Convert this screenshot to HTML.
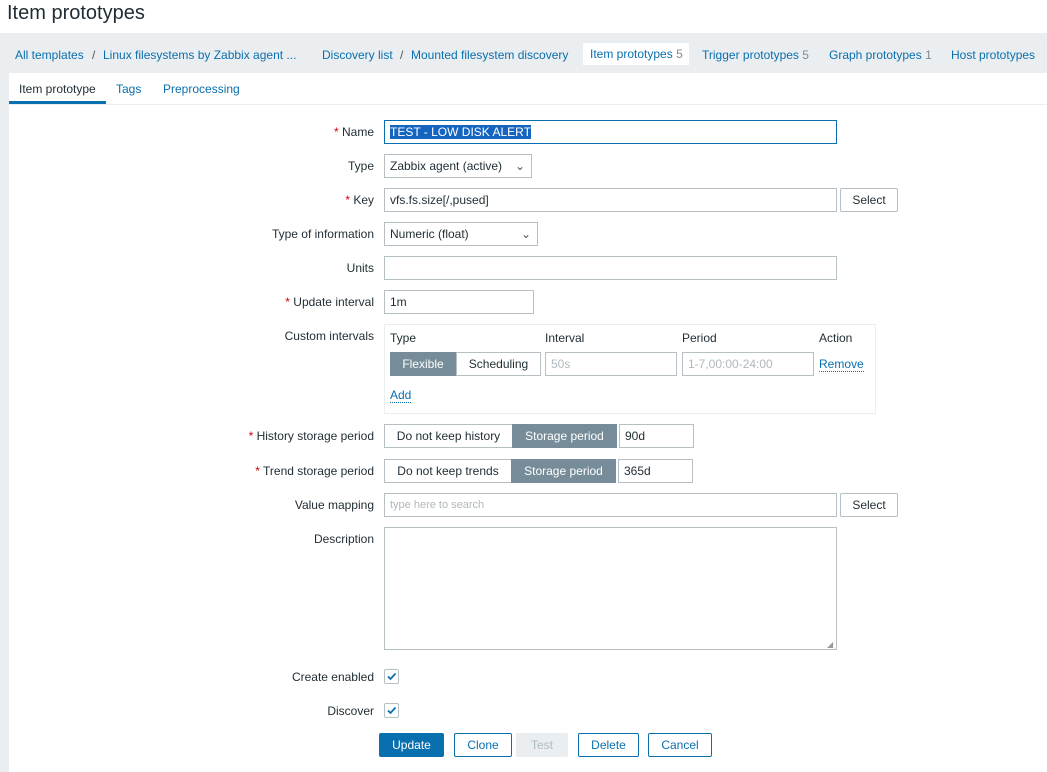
<!DOCTYPE html>
<html><head><meta charset="utf-8"><style>
*{box-sizing:border-box;margin:0;padding:0}
body{width:1047px;height:772px;background:#fff;font-family:"Liberation Sans",sans-serif;font-size:12px;color:#1f2c33;position:relative;overflow:hidden}
.a{position:absolute}
.lnk{color:#0a6fae}
.cnt{color:#808b91}
.lbl{position:absolute;right:673px;text-align:right;white-space:nowrap}
.req{color:#d40000}
.inp{position:absolute;border:1px solid #b6c0c4;background:#fff;height:24px;line-height:22px;padding-left:5px;white-space:nowrap}
.btn2{position:absolute;border:1px solid #0a6fae;color:#0a6fae;background:#fff;height:24px;line-height:22px;text-align:center;border-radius:2px}
.chk{position:absolute;width:15px;height:15px;border:1px solid #b6c0c4;border-radius:2px;background:#fff}
.seg{position:absolute;height:24px;line-height:22px;text-align:center;border:1px solid #b6c0c4}
.on{background:#768d99;color:#fff;border-color:#768d99}
</style></head><body>
<div class="a" style="left:7px;top:2px;font-size:20px;color:#1f2c33">Item prototypes</div>
<div class="a" style="left:0;top:33px;width:1047px;height:739px;background:#ebeef0"></div>
<div class="a" style="left:9px;top:73px;width:1038px;height:699px;background:#fff"></div>
<div class="a" style="left:0;top:34px;width:1047px;height:40px;line-height:42px;white-space:nowrap">
<span class="a lnk" style="left:15px">All templates</span><span class="a" style="left:92px;color:#555">/</span>
<span class="a lnk" style="left:103px">Linux filesystems by Zabbix agent ...</span>
<span class="a lnk" style="left:322px">Discovery list</span><span class="a" style="left:400px;color:#555">/</span>
<span class="a lnk" style="left:411px">Mounted filesystem discovery</span>
</div>
<div class="a" style="left:583px;top:43px;width:106px;height:22px;background:#fff;line-height:23px;padding-left:7px;white-space:nowrap"><span class="lnk">Item prototypes</span> <span class="cnt">5</span></div>
<div class="a" style="left:702px;top:48px;white-space:nowrap"><span class="lnk">Trigger prototypes</span> <span class="cnt">5</span></div>
<div class="a" style="left:829px;top:48px;white-space:nowrap"><span class="lnk">Graph prototypes</span> <span class="cnt">1</span></div>
<div class="a" style="left:951px;top:48px;white-space:nowrap"><span class="lnk">Host prototypes</span></div>
<div class="a" style="left:19px;top:82px">Item prototype</div>
<div class="a lnk" style="left:116px;top:82px">Tags</div>
<div class="a lnk" style="left:163px;top:82px">Preprocessing</div>
<div class="a" style="left:9px;top:104px;width:1038px;height:1px;background:#ebeef0"></div>
<div class="a" style="left:9px;top:101px;width:97px;height:3px;background:#0a6fae"></div>

<div class="lbl" style="top:125px"><span class="req">*</span> Name</div>
<div class="inp" style="left:384px;top:120px;width:453px;border-color:#0a6fae"><span style="background:#1565c0;color:#fff">TEST - LOW DISK ALERT</span></div>
<div class="lbl" style="top:159px">Type</div>
<div class="inp" style="left:384px;top:154px;width:148px">Zabbix agent (active)<span class="a" style="right:6px;color:#555">&#8964;</span></div>
<div class="lbl" style="top:193px"><span class="req">*</span> Key</div>
<div class="inp" style="left:384px;top:188px;width:453px">vfs.fs.size[/,pused]</div>
<div class="inp" style="left:840px;top:188px;width:58px;padding:0;text-align:center;border-radius:2px">Select</div>
<div class="lbl" style="top:227px">Type of information</div>
<div class="inp" style="left:384px;top:222px;width:154px">Numeric (float)<span class="a" style="right:6px;color:#555">&#8964;</span></div>
<div class="lbl" style="top:261px">Units</div>
<div class="inp" style="left:384px;top:256px;width:453px"></div>
<div class="lbl" style="top:295px"><span class="req">*</span> Update interval</div>
<div class="inp" style="left:384px;top:290px;width:150px">1m</div>
<div class="lbl" style="top:329px">Custom intervals</div>
<div class="a" style="left:384px;top:324px;width:492px;height:90px;border:1px solid #ebeef0"></div>
<div class="a" style="left:390px;top:331px">Type</div>
<div class="a" style="left:545px;top:331px">Interval</div>
<div class="a" style="left:682px;top:331px">Period</div>
<div class="a" style="left:819px;top:331px">Action</div>
<div class="seg on" style="left:390px;top:352px;width:66px">Flexible</div>
<div class="seg" style="left:456px;top:352px;width:85px">Scheduling</div>
<div class="inp" style="left:545px;top:352px;width:132px;color:#b0b8bc">50s</div>
<div class="inp" style="left:682px;top:352px;width:132px;color:#b0b8bc">1-7,00:00-24:00</div>
<div class="a lnk" style="left:819px;top:357px;border-bottom:1px dotted #0a6fae">Remove</div>
<div class="a lnk" style="left:390px;top:388px;border-bottom:1px dotted #0a6fae">Add</div>
<div class="lbl" style="top:429px"><span class="req">*</span> History storage period</div>
<div class="seg" style="left:384px;top:424px;width:129px">Do not keep history</div>
<div class="seg on" style="left:512px;top:424px;width:105px">Storage period</div>
<div class="inp" style="left:619px;top:424px;width:75px">90d</div>
<div class="lbl" style="top:464px"><span class="req">*</span> Trend storage period</div>
<div class="seg" style="left:384px;top:459px;width:128px">Do not keep trends</div>
<div class="seg on" style="left:511px;top:459px;width:105px">Storage period</div>
<div class="inp" style="left:618px;top:459px;width:75px">365d</div>
<div class="lbl" style="top:498px">Value mapping</div>
<div class="inp" style="left:384px;top:493px;width:453px;color:#b0b8bc;font-size:11px">type here to search</div>
<div class="inp" style="left:840px;top:493px;width:58px;padding:0;text-align:center;border-radius:2px">Select</div>
<div class="lbl" style="top:532px">Description</div>
<div class="inp" style="left:384px;top:527px;width:453px;height:123px"></div>
<div class="a" style="left:827px;top:640px;color:#999;font-size:8px">◢</div>
<div class="lbl" style="top:670px">Create enabled</div>
<div class="chk" style="left:384px;top:669px"><svg width="13" height="13" viewBox="0 0 13 13"><path d="M3 6.5l2.5 2.5L10.5 3.5" stroke="#0a6fae" stroke-width="1.8" fill="none"/></svg></div>
<div class="lbl" style="top:704px">Discover</div>
<div class="chk" style="left:384px;top:703px"><svg width="13" height="13" viewBox="0 0 13 13"><path d="M3 6.5l2.5 2.5L10.5 3.5" stroke="#0a6fae" stroke-width="1.8" fill="none"/></svg></div>
<div class="btn2" style="left:379px;top:733px;width:65px;background:#0a6fae;color:#fff">Update</div>
<div class="btn2" style="left:454px;top:733px;width:58px">Clone</div>
<div class="btn2" style="left:516px;top:733px;width:52px;background:#ebeef0;border-color:#ebeef0;color:#acbbc2">Test</div>
<div class="btn2" style="left:578px;top:733px;width:61px">Delete</div>
<div class="btn2" style="left:648px;top:733px;width:64px">Cancel</div>
</body></html>
